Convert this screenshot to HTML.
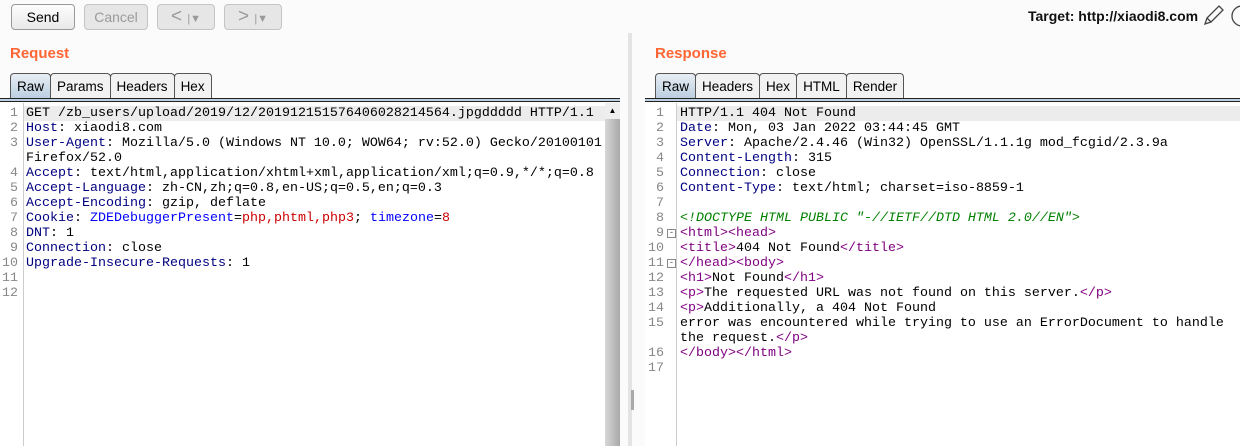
<!DOCTYPE html>
<html><head><style>
*{margin:0;padding:0;box-sizing:border-box}
body{width:1240px;height:446px;background:#fbfbfb;font-family:"Liberation Sans",sans-serif;position:relative;overflow:hidden}
.btn{position:absolute;top:4px;height:26px;border:1px solid #999;border-radius:4px;background:linear-gradient(#fdfdfd,#e9e9e9);font-size:14px;text-align:center;line-height:24px}
.dis{border-color:#c4c4c4;color:#9a9a9a;background:#e6e6e6}
.h{position:absolute;top:45px;color:#ff6633;font-weight:bold;font-size:15px}
.tabs{position:absolute;top:73px;height:26px;display:flex}
.tab{height:26px;border:1px solid #555;border-bottom:none;border-radius:4px 4px 0 0;padding:0 6px;font-size:13.5px;line-height:25px;background:#f2f2f2;margin-right:-1px}
.tab.sel{background:linear-gradient(#e8eef4,#b9cde0)}
.bar{position:absolute;top:98px;height:4px;background:#bcd0e2;border-top:1px solid #222;border-bottom:1px solid #222}
.ed{position:absolute;top:103px;bottom:0;background:#fff;font-family:"Liberation Mono",monospace;font-size:13.33px;line-height:15px}
.gut{position:absolute;left:0;top:0;bottom:0;background:#fff;border-right:1px solid #ccc;color:#888;text-align:right}
.code{position:absolute;top:3px;white-space:pre;color:#000}
.hl{position:absolute;top:3px;height:15px;background:#ececec}
.k{color:#000080}.r{color:#c00}.b{color:#00f}.p{color:#800080}.c{color:#008000;font-style:italic}
</style></head><body>
<div class="btn" style="left:11px;width:64px">Send</div>
<div class="btn dis" style="left:84px;width:64px">Cancel</div>
<div class="btn dis" style="left:157px;width:58px;font-size:19px">&lt;&nbsp;<span style="font-size:11px">|▼</span></div>
<div class="btn dis" style="left:224px;width:58px;font-size:19px">&gt;&nbsp;<span style="font-size:11px">|▼</span></div>
<div style="position:absolute;left:1028px;top:8px;font-size:14px;font-weight:bold;color:#111">Target: http://xiaodi8.com</div>
<svg style="position:absolute;left:1202px;top:4px" width="38" height="24"><path d="M3 20 L5 14 L17 2 L21 6 L9 18 Z M5 14 L9 18" fill="none" stroke="#444" stroke-width="1.3"/><circle cx="40" cy="12" r="10" fill="none" stroke="#444" stroke-width="1.3"/></svg>
<div class="h" style="left:10px">Request</div>
<div class="h" style="left:655px">Response</div>
<div class="tabs" style="left:10px"><div class="tab sel">Raw</div><div class="tab">Params</div><div class="tab">Headers</div><div class="tab">Hex</div></div>
<div class="tabs" style="left:655px"><div class="tab sel">Raw</div><div class="tab">Headers</div><div class="tab">Hex</div><div class="tab">HTML</div><div class="tab">Render</div></div>
<div class="bar" style="left:0;width:620px"></div>
<div class="bar" style="left:645px;width:595px"></div>
<div style="position:absolute;left:628px;top:33px;width:4px;bottom:0;background:#e4e4e4"></div>
<div style="position:absolute;left:631px;top:390px;width:3px;height:20px;background:#aaa"></div>
<div class="ed" style="left:0;width:605px">
<div class="hl" style="left:24px;right:0"></div>
<div class="gut" style="width:24px;padding:3px 5px 0 0">1<br>2<br>3<br><br>4<br>5<br>6<br>7<br>8<br>9<br>10<br>11<br>12</div>
<div class="code" style="left:26px">GET /zb_users/upload/2019/12/201912151576406028214564.jpgddddd HTTP/1.1
<span class="k">Host</span>: xiaodi8.com
<span class="k">User-Agent</span>: Mozilla/5.0 (Windows NT 10.0; WOW64; rv:52.0) Gecko/20100101
Firefox/52.0
<span class="k">Accept</span>: text/html,application/xhtml+xml,application/xml;q=0.9,*/*;q=0.8
<span class="k">Accept-Language</span>: zh-CN,zh;q=0.8,en-US;q=0.5,en;q=0.3
<span class="k">Accept-Encoding</span>: gzip, deflate
<span class="k">Cookie</span>: <span class="b">ZDEDebuggerPresent</span>=<span class="r">php,phtml,php3</span>; <span class="b">timezone</span>=<span class="r">8</span>
<span class="k">DNT</span>: 1
<span class="k">Connection</span>: close
<span class="k">Upgrade-Insecure-Requests</span>: 1</div>
</div>
<div style="position:absolute;left:605px;top:103px;width:15px;bottom:0;background:linear-gradient(90deg,#d8d8d8,#a8a8a8)"></div>
<div style="position:absolute;left:605px;top:103px;width:15px;height:16px;background:#eee;font-size:8px;text-align:center;line-height:16px">▲</div>
<div class="ed" style="left:645px;right:0">
<div class="hl" style="left:32px;right:0"></div>
<div class="gut" style="width:32px;padding:3px 12px 0 0">1<br>2<br>3<br>4<br>5<br>6<br>7<br>8<br>9<br>10<br>11<br>12<br>13<br>14<br>15<br><br>16<br>17</div>
<div class="code" style="left:35px">HTTP/1.1 404 Not Found
<span class="k">Date</span>: Mon, 03 Jan 2022 03:44:45 GMT
<span class="k">Server</span>: Apache/2.4.46 (Win32) OpenSSL/1.1.1g mod_fcgid/2.3.9a
<span class="k">Content-Length</span>: 315
<span class="k">Connection</span>: close
<span class="k">Content-Type</span>: text/html; charset=iso-8859-1

<span class="c">&lt;!DOCTYPE HTML PUBLIC "-//IETF//DTD HTML 2.0//EN"&gt;</span>
<span class="p">&lt;html&gt;&lt;head&gt;</span>
<span class="p">&lt;title&gt;</span>404 Not Found<span class="p">&lt;/title&gt;</span>
<span class="p">&lt;/head&gt;&lt;body&gt;</span>
<span class="p">&lt;h1&gt;</span>Not Found<span class="p">&lt;/h1&gt;</span>
<span class="p">&lt;p&gt;</span>The requested URL was not found on this server.<span class="p">&lt;/p&gt;</span>
<span class="p">&lt;p&gt;</span>Additionally, a 404 Not Found
error was encountered while trying to use an ErrorDocument to handle
the request.<span class="p">&lt;/p&gt;</span>
<span class="p">&lt;/body&gt;&lt;/html&gt;</span></div>
<div style="position:absolute;left:22px;top:126px;width:9px;height:9px;border:1px solid #888;font-size:9px;line-height:7px;text-align:center;color:#555;background:#fff">-</div>
<div style="position:absolute;left:22px;top:156px;width:9px;height:9px;border:1px solid #888;font-size:9px;line-height:7px;text-align:center;color:#555;background:#fff">-</div>
</div>
</body></html>
